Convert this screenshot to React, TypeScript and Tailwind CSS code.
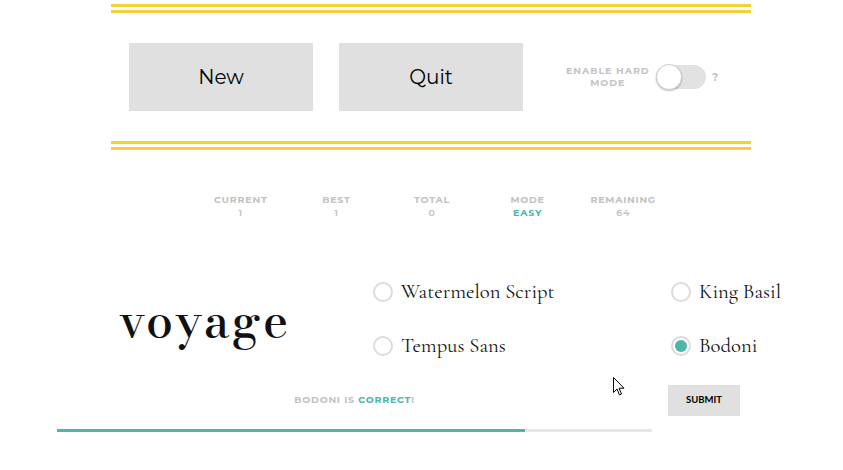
import React from "react";

const sans = "font-['Montserrat','Inter','Liberation_Sans',sans-serif]";

function Radio({ label, checked }: { label: string; checked?: boolean }) {
  return (
    <div className="flex items-center h-[54px]">
      <div className="w-[20px] h-[20px] rounded-full border-2 border-[#dcdcdc] bg-white flex items-center justify-center">
        {checked && <div className="w-[12px] h-[12px] rounded-full bg-[#4db6a9]" />}
      </div>
      <span className="ml-[8px] text-[20.7px] text-[#111] font-['Cormorant_Garamond','Liberation_Serif',serif] leading-none">
        {label}
      </span>
    </div>
  );
}

function Stat({ label, value, teal }: { label: string; value: string; teal?: boolean }) {
  return (
    <div className="flex flex-col items-center text-[9.5px] font-bold tracking-[0.08em] leading-[13px]">
      <span className="text-[#c2c2c2]">{label}</span>
      <span className={teal ? "text-[#4db6a9]" : "text-[#c2c2c2] font-semibold"}>{value}</span>
    </div>
  );
}

export default function App() {
  return (
    <div className={`w-[843px] h-[470px] bg-white relative overflow-hidden ${sans}`}>
      <div className="ml-[111px] w-[640px] pt-[4px]">
        <div className="h-[3px] bg-[#f7cf37]" />
        <div className="h-[3px] bg-[#f7cf37] mt-[3px]" />
        <div className="flex items-center mt-[30px] pl-[18px] h-[68px]">
          <button className="w-[184px] h-[68px] bg-[#e0e0e0] text-[20px] text-black">New</button>
          <button className="w-[184px] h-[68px] bg-[#e0e0e0] text-[20px] text-black ml-[26px]">Quit</button>
          <div className="ml-[43px] whitespace-nowrap text-center text-[9.5px] font-bold tracking-[0.1em] leading-[12px] text-[#c4c4c4]">
            ENABLE HARD
            <br />
            MODE
          </div>
          <div className="ml-[6px] relative w-[50px] h-[24px] rounded-full bg-[#e2e2e2]">
            <div className="absolute left-[0px] top-[-1px] w-[26px] h-[26px] rounded-full bg-white border border-[#cfcfcf] shadow-[0_1px_2px_rgba(0,0,0,0.25)]" />
          </div>
          <span className="ml-[6px] text-[11px] font-bold text-[#c4c4c4]">?</span>
        </div>
        <div className="h-[3px] bg-[#f7cf37] mt-[30px]" />
        <div className="h-[3px] bg-[#f7cf37] mt-[3px]" />
      </div>

      <div className="ml-[193px] w-[478px] mt-[43px] grid grid-cols-5">
        <Stat label="CURRENT" value="1" />
        <Stat label="BEST" value="1" />
        <Stat label="TOTAL" value="0" />
        <Stat label="MODE" value="EASY" teal />
        <Stat label="REMAINING" value="64" />
      </div>

      <div className="ml-[119px] mt-[46px] flex items-center h-[108px]">
        <div className="w-[254px] text-[48px] font-medium font-['Bodoni_Moda','Libre_Bodoni','Liberation_Serif',serif] text-[#111] tracking-[2px] leading-none pt-[4px]">
          voyage
        </div>
        <div className="grid grid-cols-[298px_auto]">
          <Radio label="Watermelon Script" />
          <Radio label="King Basil" />
          <Radio label="Tempus Sans" />
          <Radio label="Bodoni" checked />
        </div>
      </div>

      <div className="ml-[57px] mt-[12px] flex items-start">
        <div className="w-[595px]">
          <div className="h-[31px] flex items-center justify-center text-[9.5px] font-bold tracking-[0.08em] text-[#c2c2c2]">
            BODONI IS&nbsp;<span className="text-[#4db6a9]">CORRECT</span>!
          </div>
          <div className="mt-[13px] h-[3px] bg-[#e6e6e6] flex">
            <div className="h-[3px] bg-[#4db6a9]" style={{ width: `${(468 / 595) * 100}%` }} />
          </div>
        </div>
        <button className="ml-[16px] w-[72px] h-[31px] bg-[#e0e0e0] text-[9.5px] font-bold text-black font-['Lato','Liberation_Sans',sans-serif]">
          SUBMIT
        </button>
      </div>

      <svg className="absolute left-[613px] top-[377px]" width="12" height="19" viewBox="0 0 12 19">
        <path d="M0.5 0.5 L0.5 15.5 L4 12 L6.5 18 L8.5 17 L6 11.2 L11 11.2 Z" fill="white" stroke="black" strokeWidth="1" strokeLinejoin="miter" />
      </svg>
    </div>
  );
}
